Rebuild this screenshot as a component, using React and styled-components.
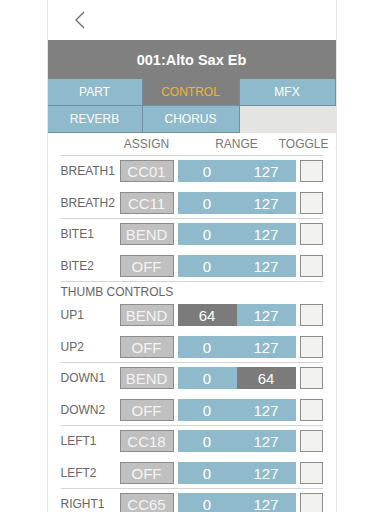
import React from 'react'
import styled, { createGlobalStyle } from 'styled-components'

const Global = createGlobalStyle`
  html, body { margin: 0; padding: 0; background: #fff; }
  body { font-family: "Liberation Sans", Arial, sans-serif; }
`

const Page = styled.div`
  width: 384px;
  height: 512px;
  overflow: hidden;
  display: flex;
  justify-content: center;
`

const Panel = styled.div`
  width: 288px;
  margin-left: -1px;
  border-left: 1px solid #e6e6e6;
  border-right: 1px solid #e6e6e6;
  display: flex;
  flex-direction: column;
  & > * { flex-shrink: 0; }
`

const TopBar = styled.div`
  height: 40px;
  display: flex;
  align-items: center;
  padding-left: 26px;
`

const Title = styled.div`
  height: 39px;
  background: #808080;
  color: #fff;
  font-weight: bold;
  font-size: 14.5px;
  display: flex;
  align-items: center;
  justify-content: center;
`

const Tabs = styled.div`
  display: grid;
  grid-template-columns: 95px 97px 96px;
`

const Tab = styled.div`
  height: 27px;
  box-sizing: border-box;
  border-right: 1px solid #6f909e;
  border-bottom: 1px solid #6f909e;
  background: ${({ active, empty }) => (empty ? '#e4e4e0' : active ? '#808080' : '#8fbacb')};
  border-color: ${({ empty }) => (empty ? '#e4e4e0' : '#6f909e')};
  color: ${({ active }) => (active ? '#f2b233' : '#fff')};
  font-size: 12px;
  display: flex;
  align-items: center;
  justify-content: center;
`

const Table = styled.div`
  margin: 0 13px;
`

const Cols = styled.div`
  display: grid;
  grid-template-columns: 55px 54px 118px 23px;
  column-gap: 4px;
  align-items: center;
`

const HeadRow = styled(Cols)`
  height: 22px;
  color: #777;
  font-size: 12px;
  span { text-align: center; white-space: nowrap; }
  span:last-child { justify-self: end; margin-right: -6px; }
`

const Group = styled.div`
  border-top: 1px solid #d4d4d4;
  padding: 4px 0;
  display: flex;
  flex-direction: column;
  gap: 10px;
`

const SectionLabel = styled.div`
  height: 18px;
  line-height: 12px;
  font-size: 12px;
  color: #666;
  margin-bottom: -10px;
`

const Row = styled(Cols)`
  height: 22px;
`

const Name = styled.div`
  font-size: 12px;
  color: #666;
  white-space: nowrap;
`

const Assign = styled.div`
  height: 22px;
  box-sizing: border-box;
  background: #c0c0c0;
  border: 1px solid #8c8c8c;
  color: #f4f4f4;
  font-size: 15px;
  display: flex;
  align-items: center;
  justify-content: center;
`

const Range = styled.div`
  height: 22px;
  display: grid;
  grid-template-columns: 1fr 1fr;
  background: #8fbacb;
`

const Val = styled.div`
  background: ${({ dark }) => (dark ? '#7b7b7b' : 'transparent')};
  color: #fff;
  font-size: 15px;
  display: flex;
  align-items: center;
  justify-content: center;
`

const Toggle = styled.div`
  height: 22px;
  box-sizing: border-box;
  background: #f2f2ee;
  border: 1px solid #8c8c8c;
`

const Back = () => (
  <svg width="12" height="18" viewBox="0 0 12 18">
    <path d="M10 1 L2 9 L10 17" fill="none" stroke="#6a6a6a" strokeWidth="1.3" />
  </svg>
)

const groups = [
  { rows: [['BREATH1', 'CC01'], ['BREATH2', 'CC11']] },
  { rows: [['BITE1', 'BEND'], ['BITE2', 'OFF']] },
  { label: 'THUMB CONTROLS', rows: [['UP1', 'BEND', 'lo', '64'], ['UP2', 'OFF']] },
  { rows: [['DOWN1', 'BEND', 'hi', '0', '64'], ['DOWN2', 'OFF']] },
  { rows: [['LEFT1', 'CC18'], ['LEFT2', 'OFF']] },
  { rows: [['RIGHT1', 'CC65']] },
]

const App = () => {
  return (
    <Page>
      <Global />
      <Panel>
        <TopBar><Back /></TopBar>
        <Title>001:Alto Sax Eb</Title>
        <Tabs>
          <Tab>PART</Tab>
          <Tab active>CONTROL</Tab>
          <Tab>MFX</Tab>
          <Tab>REVERB</Tab>
          <Tab>CHORUS</Tab>
          <Tab empty />
        </Tabs>
        <Table>
          <HeadRow>
            <span />
            <span>ASSIGN</span>
            <span>RANGE</span>
            <span>TOGGLE</span>
          </HeadRow>
          {groups.map((g, i) => (
            <Group key={i}>
              {g.label && <SectionLabel>{g.label}</SectionLabel>}
              {g.rows.map(([name, assign, dark, lo = '0', hi = '127']) => (
                <Row key={name}>
                  <Name>{name}</Name>
                  <Assign>{assign}</Assign>
                  <Range>
                    <Val dark={dark === 'lo'}>{lo}</Val>
                    <Val dark={dark === 'hi'}>{hi}</Val>
                  </Range>
                  <Toggle />
                </Row>
              ))}
            </Group>
          ))}
        </Table>
      </Panel>
    </Page>
  )
}

export default App
